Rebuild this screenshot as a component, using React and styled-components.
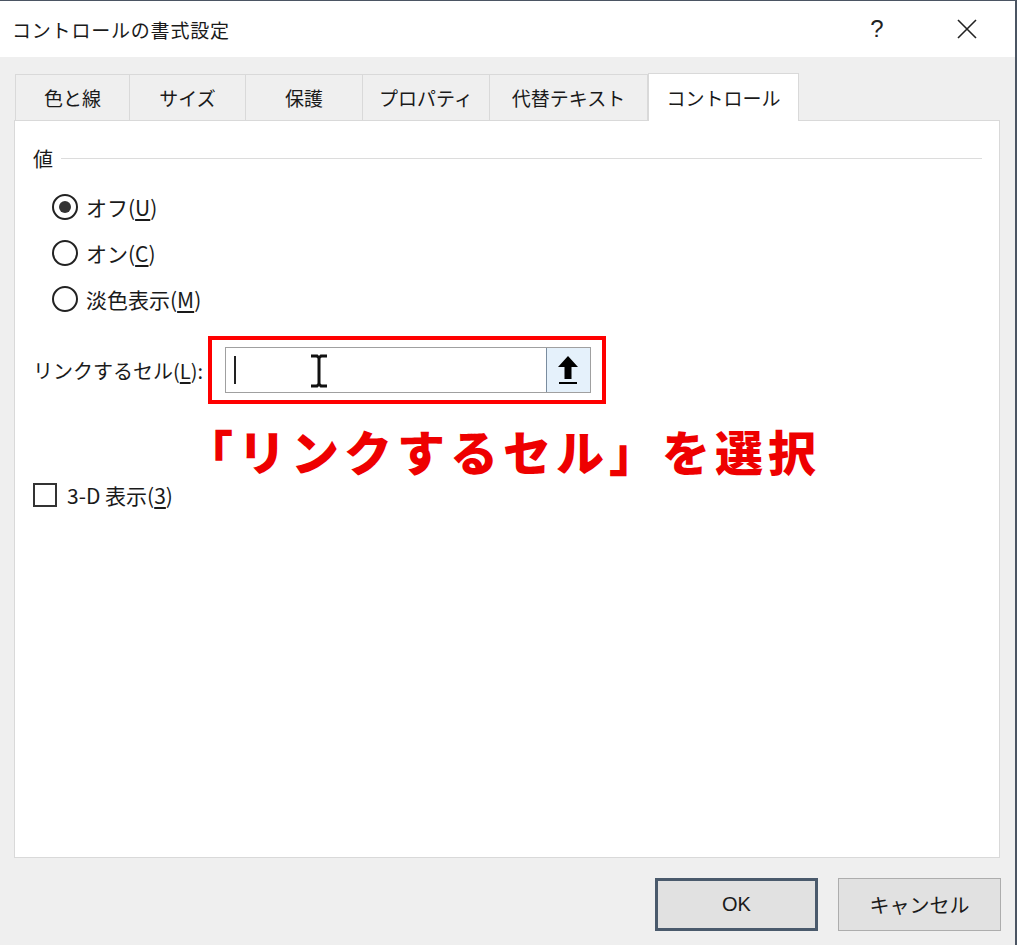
import React from "react";
import styled, { createGlobalStyle } from "styled-components";

const Global = createGlobalStyle`
  html, body { margin: 0; padding: 0; background: #efefef; }
  body { font-family: "Noto Sans CJK JP", "Noto Sans", sans-serif; color: #1a1a1a; }
  * { box-sizing: border-box; }
`;

const Window = styled.div`
  width: 1017px;
  height: 945px;
  background: #efefef;
  border-top: 1px solid #4b5563;
  border-right: 2px solid #4b5563;
  display: flex;
  flex-direction: column;
  overflow: hidden;
`;

const TitleBar = styled.div`
  height: 56px;
  background: #fff;
  display: flex;
  align-items: center;
  padding-left: 12px;
  flex-shrink: 0;
`;

const Title = styled.div`
  flex: 1;
  font-size: 19px;
  letter-spacing: 0.8px;
`;

const TitleBtn = styled.div`
  width: ${(p) => p.w}px;
  display: flex;
  justify-content: center;
  font-size: ${(p) => p.fs}px;
  font-family: "Liberation Sans", sans-serif;
  color: #222;
`;

const Body = styled.div`
  flex: 1;
  display: flex;
  flex-direction: column;
  padding: 15px 14px 0 14px;
`;

const Tabs = styled.div`
  display: flex;
  align-items: flex-end;
  height: 48px;
  padding-left: 1px;
`;

const Tab = styled.div`
  width: ${(p) => p.w}px;
  height: ${(p) => (p.active ? 48 : 46)}px;
  display: flex;
  align-items: center;
  justify-content: center;
  font-size: 19px;
  background: ${(p) => (p.active ? "#fff" : "#efefef")};
  border: 1px solid #d9d9d9;
  border-bottom: none;
  border-left: ${(p) => (p.first || p.active ? "1px solid #d9d9d9" : "none")};
  margin-bottom: ${(p) => (p.active ? -1 : 0)}px;
  position: relative;
  z-index: ${(p) => (p.active ? 1 : 0)};
`;

const Panel = styled.div`
  width: 986px;
  height: 738px;
  background: #fff;
  border: 1px solid #d9d9d9;
  padding: 24px 17px 0 18px;
  display: flex;
  flex-direction: column;
`;

const GroupHead = styled.div`
  display: flex;
  align-items: center;
  gap: 8px;
  font-size: 20px;
  height: 26px;
`;

const GroupLine = styled.div`
  flex: 1;
  height: 1px;
  background: #dcdcdc;
`;

const RadioList = styled.div`
  display: flex;
  flex-direction: column;
  gap: 20px;
  padding: 23px 0 0 19px;
`;

const RadioRow = styled.div`
  display: flex;
  align-items: center;
  gap: 8px;
  font-size: 21px;
  height: 26px;
`;

const RadioCircle = styled.span`
  width: 26px;
  height: 26px;
  border-radius: 50%;
  border: 2px solid #222;
  display: flex;
  align-items: center;
  justify-content: center;
  &::after {
    content: "";
    width: 12px;
    height: 12px;
    border-radius: 50%;
    background: ${(p) => (p.checked ? "#333" : "transparent")};
  }
`;

const U = styled.span`
  text-decoration: underline;
  text-underline-offset: 3px;
`;

const LinkRow = styled.div`
  display: flex;
  align-items: center;
  margin-top: 24px;
  gap: 5px;
`;

const LinkLabel = styled.span`
  font-size: 20px;
`;

const Highlight = styled.div`
  border: 4px solid #ff0000;
  padding: 7px 11px 7px 13px;
`;

const TextBox = styled.div`
  width: 366px;
  height: 46px;
  border: 1px solid #a0a0a0;
  display: flex;
  align-items: center;
  position: relative;
`;

const Caret = styled.span`
  width: 2px;
  height: 28px;
  background: #222;
  margin-left: 8px;
`;

const IBeam = styled.svg`
  position: absolute;
  left: 84px;
  top: 6px;
`;

const RefBtn = styled.div`
  margin-left: auto;
  width: 44px;
  height: 44px;
  background: #e5f1fb;
  border-left: 1px solid #7a8da0;
  display: flex;
  align-items: center;
  justify-content: center;
`;

const Annotation = styled.div`
  margin: 16px 0 0 152px;
  color: #ee0000;
  font-weight: 900;
  font-size: 48px;
  letter-spacing: 5px;
  line-height: 60px;
`;

const CheckRow = styled.div`
  display: flex;
  align-items: center;
  gap: 10px;
  font-size: 21px;
  margin-top: 0;
`;

const CheckBox = styled.span`
  width: 24px;
  height: 24px;
  border: 2px solid #333;
`;

const Footer = styled.div`
  display: flex;
  justify-content: flex-end;
  gap: 20px;
  padding-top: 20px;
`;

const Button = styled.div`
  width: 163px;
  height: 53px;
  background: #e1e1e1;
  border: ${(p) => (p.primary ? "3px solid #4a5a6c" : "1px solid #adadad")};
  display: flex;
  align-items: center;
  justify-content: center;
  font-size: 20px;
  font-family: ${(p) => (p.latin ? '"Liberation Sans", sans-serif' : '"Noto Sans CJK JP", sans-serif')};
`;

const tabs = [
  { label: "色と線", w: 115 },
  { label: "サイズ", w: 116 },
  { label: "保護", w: 117 },
  { label: "プロパティ", w: 127 },
  { label: "代替テキスト", w: 158 },
  { label: "コントロール", w: 151, active: true },
];

export default function App() {
  return (
    <>
      <Global />
      <Window>
        <TitleBar>
          <Title>コントロールの書式設定</Title>
          <TitleBtn w={84} fs={24}>?</TitleBtn>
          <TitleBtn w={96} fs={26}>
            <svg width="20" height="20" viewBox="0 0 20 20">
              <path d="M1 1 L19 19 M19 1 L1 19" stroke="#222" strokeWidth="1.6" />
            </svg>
          </TitleBtn>
        </TitleBar>
        <Body>
          <Tabs>
            {tabs.map((t, i) => (
              <Tab key={t.label} w={t.w} active={t.active} first={i === 0}>
                {t.label}
              </Tab>
            ))}
          </Tabs>
          <Panel>
            <GroupHead>
              <span>値</span>
              <GroupLine />
            </GroupHead>
            <RadioList>
              <RadioRow>
                <RadioCircle checked />
                <span>オフ(<U>U</U>)</span>
              </RadioRow>
              <RadioRow>
                <RadioCircle />
                <span>オン(<U>C</U>)</span>
              </RadioRow>
              <RadioRow>
                <RadioCircle />
                <span>淡色表示(<U>M</U>)</span>
              </RadioRow>
            </RadioList>
            <LinkRow>
              <LinkLabel>リンクするセル(<U>L</U>):</LinkLabel>
              <Highlight>
                <TextBox>
                  <Caret />
                  <IBeam width="18" height="34" viewBox="0 0 18 34">
                    <path d="M1 2 H7 L9 4 L11 2 H17 M9 4 V30 M1 32 H7 L9 30 L11 32 H17" stroke="#111" strokeWidth="3" fill="none" />
                  </IBeam>
                  <RefBtn>
                    <svg width="26" height="32" viewBox="0 0 26 32">
                      <path d="M13 2 L23 13 H16.5 V25 H9.5 V13 H3 Z" fill="#000" />
                      <rect x="4" y="28" width="18" height="2" fill="#000" />
                    </svg>
                  </RefBtn>
                </TextBox>
              </Highlight>
            </LinkRow>
            <Annotation>「リンクするセル」を選択</Annotation>
            <CheckRow>
              <CheckBox />
              <span>3-D 表示(<U>3</U>)</span>
            </CheckRow>
          </Panel>
          <Footer>
            <Button primary latin>OK</Button>
            <Button>キャンセル</Button>
          </Footer>
        </Body>
      </Window>
    </>
  );
}
